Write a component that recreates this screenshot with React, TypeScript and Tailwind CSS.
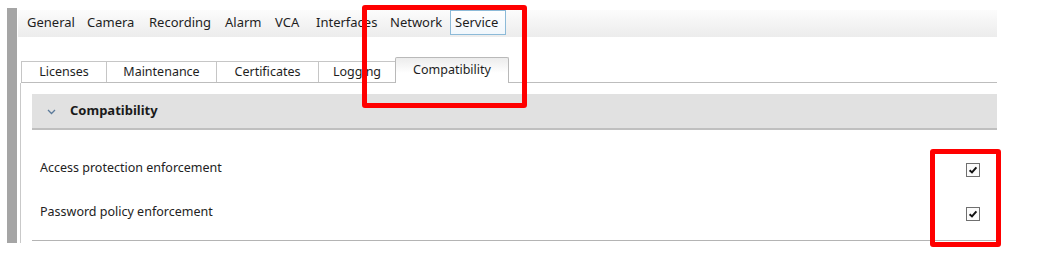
import React from "react";

const menu = [
  { label: "General", w: "w-[60px]" },
  { label: "Camera", w: "w-[62px]" },
  { label: "Recording", w: "w-[76px]" },
  { label: "Alarm", w: "w-[50px]" },
  { label: "VCA", w: "w-[41px]" },
  { label: "Interfaces", w: "w-[74px]" },
  { label: "Network", w: "w-[60px]" },
];

const tabs = [
  { label: "Licenses", w: "w-[85px]" },
  { label: "Maintenance", w: "w-[110px]" },
  { label: "Certificates", w: "w-[102px]" },
  { label: "Logging", w: "w-[77px]" },
];

const settings = ["Access protection enforcement", "Password policy enforcement"];

function Checkbox() {
  return (
    <div className="mt-[3px] flex h-[14px] w-[14px] items-center justify-center border border-[#6f6f6f] bg-[#fbfbfb]">
      <svg width="10" height="10" viewBox="0 0 10 10">
        <path d="M1.6 5.2 L4 7.4 L8.4 2.4" fill="none" stroke="#111" strokeWidth="2" />
      </svg>
    </div>
  );
}

export default function App() {
  return (
    <div
      className="relative h-[261px] w-[1040px] overflow-hidden bg-white text-[#1e1e1e]"
      style={{ fontFamily: '"Noto Sans", "Open Sans", sans-serif' }}
    >
      <div className="flex pl-[7px] pt-[8px]">
        <div className="h-[235px] w-[10px] bg-[#a5a5a5]" />

        <div className="flex w-[980px] flex-col">
          {/* top menu */}
          <div className="ml-px mt-[2px] flex h-[27px] items-start bg-gradient-to-b from-[#fcfcfc] to-[#ececec] pl-[9px] text-[13px]">
            {menu.map((m) => (
              <div key={m.label} className={`${m.w} flex h-[25px] items-center`}>
                {m.label}
              </div>
            ))}
            <div className="flex h-[25px] w-[56px] items-center border border-[#8cbad8] bg-gradient-to-b from-[#ffffff] to-[#f1f7fc] pl-[4px]">
              Service
            </div>
          </div>

          {/* sub tabs */}
          <div className="ml-[4px] mt-[20px] flex h-[26px] items-end border-b border-[#bdbdbd] text-[12.5px]">
            {tabs.map((t) => (
              <div
                key={t.label}
                className={`${t.w} flex h-[21px] items-center justify-center border-l border-t border-[#c6c6c6] bg-white`}
              >
                {t.label}
              </div>
            ))}
            <div className="-mb-px flex h-[26px] w-[114px] items-start justify-center rounded-t-[2px] border-x border-t border-[#b9b9b9] bg-gradient-to-b from-[#ececec] to-white to-60% pt-[3px]">
              Compatibility
            </div>
          </div>

          {/* panel */}
          <div className="ml-[3px] flex h-[160px] flex-col border-l border-[#c9c9c9] pl-[11px]">
            <div className="mt-[11px] flex h-[36px] w-[965px] items-center border-b-2 border-[#bfbfbf] bg-[#e1e1e1] pl-[15px]">
              <svg width="9" height="6" viewBox="0 0 9 6" className="mt-px">
                <path d="M1 1 L4.5 4.5 L8 1" fill="none" stroke="#5b7a9a" strokeWidth="1.3" />
              </svg>
              <span className="ml-[14px] text-[13px] font-bold text-[#1a1a1a]">Compatibility</span>
            </div>

            <div className="mt-[16px] flex w-[965px] flex-col">
              {settings.map((s) => (
                <div key={s} className="flex h-[44px] items-center justify-between pl-[8px] pr-[17px]">
                  <span className="text-[12.5px] text-[#222]">{s}</span>
                  <Checkbox />
                </div>
              ))}
            </div>

            <div className="mt-[6px] h-px w-[965px] bg-[#b4b4b4]" />
          </div>
        </div>
      </div>

      {/* annotation boxes */}
      <div className="absolute left-[362px] top-[5px] h-[103px] w-[165px] rounded-[3px] border-[5px] border-[#ff0000]" />
      <div className="absolute left-[930px] top-[149px] h-[98px] w-[71px] rounded-[3px] border-[5px] border-[#ff0000]" />
    </div>
  );
}
